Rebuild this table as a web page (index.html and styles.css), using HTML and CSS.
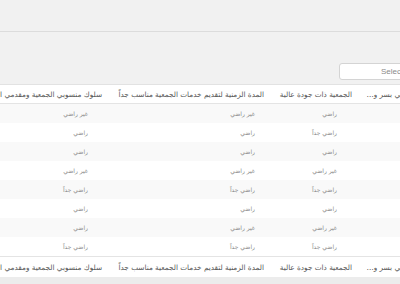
FILE: index.html
```html
<!DOCTYPE html>
<html lang="ar" dir="rtl">
<head>
<meta charset="utf-8">
<link rel="stylesheet" href="styles.css">
</head>
<body>
<div class="topbar"></div>
<div class="toolbar">
  <input class="select" type="text" placeholder="Select" dir="ltr">
</div>
<div class="grid-wrap">
  <table class="head">
    <colgroup><col class="ha"><col class="hb"><col class="hc"><col class="hd"></colgroup>
    <tr>
      <th>في بسر وسهولة</th>
      <th>الجمعية ذات جودة عالية</th>
      <th>المدة الزمنية لتقديم خدمات الجمعية مناسب جداً</th>
      <th>سلوك منسوبي الجمعية ومقدمي الخدمة</th>
    </tr>
  </table>
  <table class="body">
    <colgroup><col class="ba"><col class="bb"><col class="bc"><col class="bd"></colgroup>
    <tr><td></td><td>راضي</td><td>غير راضي</td><td>غير راضي</td></tr>
    <tr><td></td><td>راضي جداً</td><td>راضي</td><td>راضي</td></tr>
    <tr><td></td><td>راضي</td><td>راضي</td><td>راضي</td></tr>
    <tr><td></td><td>غير راضي</td><td>غير راضي</td><td>غير راضي</td></tr>
    <tr><td></td><td>راضي جداً</td><td>راضي جداً</td><td>راضي جداً</td></tr>
    <tr><td></td><td>راضي</td><td>راضي</td><td>راضي</td></tr>
    <tr><td></td><td>غير راضي</td><td>غير راضي</td><td>راضي</td></tr>
    <tr><td></td><td>راضي جداً</td><td>راضي جداً</td><td>راضي جداً</td></tr>
  </table>
  <table class="head foot">
    <colgroup><col class="ha"><col class="hb"><col class="hc"><col class="hd"></colgroup>
    <tr>
      <th>في بسر وسهولة</th>
      <th>الجمعية ذات جودة عالية</th>
      <th>المدة الزمنية لتقديم خدمات الجمعية مناسب جداً</th>
      <th>سلوك منسوبي الجمعية ومقدمي الخدمة</th>
    </tr>
  </table>
</div>
<div class="scrollbar"></div>
</body>
</html>
```
FILE: styles.css
```css
html, body {
  margin: 0;
  padding: 0;
}
body {
  background: #f1f1f1;
  font-family: "DejaVu Sans", sans-serif;
  font-size: 7.3px;
  overflow: hidden;
  width: 400px;
  height: 284px;
}
.topbar {
  height: 31px;
  border-bottom: 1px solid #dcdcdc;
}
.toolbar {
  height: 52px;
  display: flex;
  align-items: flex-start;
  padding-top: 31px;
  box-sizing: border-box;
}
.select {
  width: 72px;
  height: 17px;
  margin-right: -11px;
  box-sizing: border-box;
  border: 1px solid #d4d4d4;
  border-radius: 3px;
  background: #fff;
  font-family: "Liberation Sans", sans-serif;
  font-size: 8px;
  padding: 0 0 0 41px;
  color: #777;
  outline: none;
}
.select::placeholder {
  color: #8a8a8a;
}
.grid-wrap {
  overflow: hidden;
  width: 400px;
  border-top: 1px solid #e2e2e2;
}
table {
  border-collapse: collapse;
  table-layout: fixed;
  margin-right: -12px;
}
.head { width: 502px; background: #fff; }
.body { width: 517px; }
.ha { width: 52px; }
.hb { width: 88px; }
.hc { width: 162px; }
.hd { width: 200px; }
.ba { width: 67px; }
.bb { width: 82px; }
.bc { width: 167px; }
.bd { width: 201px; }
th {
  height: 18px;
  padding: 0 8px 0 6px;
  text-align: right;
  font-weight: normal;
  color: #555;
  white-space: nowrap;
  overflow: hidden;
  text-overflow: ellipsis;
  border-bottom: 1px solid #e4e4e4;
}
td {
  height: 19px;
  padding: 0 8px;
  text-align: right;
  color: #8a8a8a;
  white-space: nowrap;
  overflow: hidden;
  font-size: 6px;
}
.body tr:nth-child(odd) td { background: #f9f9f9; }
.body tr:nth-child(even) td { background: #fff; }
.foot th {
  height: 20px;
  border-bottom: none;
  border-top: 1px solid #e4e4e4;
}
.scrollbar {
  height: 8px;
  background: #ececec;
}
```
